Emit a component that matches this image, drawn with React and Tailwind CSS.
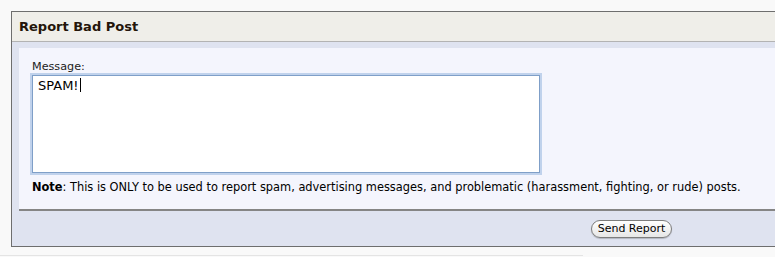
import React from "react";

const App = () => {
  return (
    <div className="w-full h-[257px] overflow-hidden bg-[#f9f9f9] pt-[11px] pl-[11px] font-['DejaVu_Sans',Verdana,sans-serif]">
      <div className="w-[1240px] border-l border-t border-b border-[#6e6e6e] bg-[#dfe3f0]">
        {/* Header */}
        <div className="h-[30px] bg-[#efeee9] border-b border-[#b3b3b3] pl-[7px] flex items-center">
          <h1 className="text-[13px] font-bold text-[#24150a]">Report Bad Post</h1>
        </div>

        {/* Body */}
        <div className="pt-[6px] pl-[7px]">
          <div className="bg-[#f4f5fd] border-b-2 border-[#858585] pl-[13px] pt-[12px] pb-[15px]">
            <label className="block text-[11.2px] leading-[14px] text-[#222]">Message:</label>
            <div className="mt-px w-[508px] h-[98px] bg-white border border-[#7f9fc8] shadow-[0_0_0_2px_rgba(140,175,220,0.5)] px-[5px] pt-[2px] text-[13px] leading-[16px] text-black">
              SPAM!
              <span className="inline-block w-px h-[14px] bg-black align-[-2px] ml-px" />
            </div>
            <p className="mt-[7px] text-[11.4px] leading-[14px] text-black">
              <span className="font-bold">Note</span>: This is ONLY to be used to report spam, advertising messages, and problematic (harassment, fighting, or rude) posts.
            </p>
          </div>
        </div>

        {/* Footer */}
        <div className="h-[35px] flex items-center justify-center">
          <button className="h-[18px] px-[6px] rounded-full border border-[#7d7d7d] bg-gradient-to-b from-white to-[#e6e6e6] shadow-[0_1px_1px_rgba(0,0,0,0.2)] text-[11px] leading-[14px] text-black">
            Send Report
          </button>
        </div>
      </div>
      <div className="mt-[8px] -ml-[11px] w-[583px] h-px bg-[#e4e4e4]" />
    </div>
  );
};

export default App;
